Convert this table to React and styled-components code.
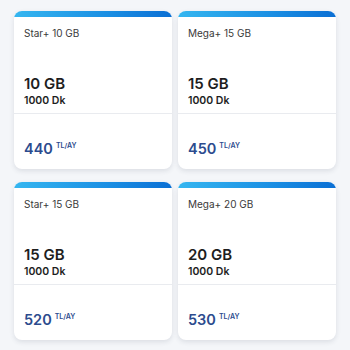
import styled, { createGlobalStyle } from "styled-components";

const packages = [
    { id: 1, name: "Star+ 10 GB", data: "10 GB", minutes: "1000 Dk", price: 440 },
    { id: 2, name: "Mega+ 15 GB", data: "15 GB", minutes: "1000 Dk", price: 450 },
    { id: 3, name: "Star+ 15 GB", data: "15 GB", minutes: "1000 Dk", price: 520 },
    { id: 4, name: "Mega+ 20 GB", data: "20 GB", minutes: "1000 Dk", price: 530 },
];

function App() {
    return (
        <>
            <GlobalStyle />
            <Grid>
                {packages.map((p) => (
                    <Card key={p.id}>
                        <Top>
                            <Title>{p.name}</Title>
                            <Amount>
                                <Data>{p.data}</Data>
                                <Minutes>{p.minutes}</Minutes>
                            </Amount>
                        </Top>
                        <Bottom>
                            <Price>
                                {p.price}
                                <sup>TL/AY</sup>
                            </Price>
                        </Bottom>
                    </Card>
                ))}
            </Grid>
        </>
    );
}

const GlobalStyle = createGlobalStyle`
    html, body {
        margin: 0;
        background: #f4f6f9;
        font-family: Inter, "Noto Sans", sans-serif;
    }
`;

const Grid = styled.div`
    display: grid;
    grid-template-columns: 158px 158px;
    column-gap: 6px;
    row-gap: 13px;
    padding: 11px 14px;
`;

const Card = styled.div`
    background: #fff;
    border-radius: 8px;
    height: 158px;
    box-shadow: 0 2px 5px rgba(40, 50, 70, 0.12);
    overflow: hidden;
    display: flex;
    flex-direction: column;

    &::before {
        content: "";
        display: block;
        flex: 0 0 6px;
        background: linear-gradient(90deg, #35b6f0 0%, #1a8ee3 60%, #0b6fd4 100%);
    }
`;

const Top = styled.div`
    flex: 0 0 97px;
    box-sizing: border-box;
    padding: 9px 10px 5px;
    display: flex;
    flex-direction: column;
    justify-content: space-between;
    border-bottom: 1px solid #e9ebef;
`;

const Title = styled.div`
    font-size: 10px;
    line-height: 14px;
    color: #3a3a3a;
`;

const Amount = styled.div`
    display: flex;
    flex-direction: column;
    gap: 1px;
`;

const Data = styled.div`
    font-size: 15px;
    line-height: 18px;
    font-weight: 600;
    color: #1e1e1e;
`;

const Minutes = styled.div`
    font-size: 10.5px;
    line-height: 14px;
    font-weight: 600;
    color: #1e1e1e;
`;

const Bottom = styled.div`
    flex: 1;
    padding: 23px 10px 0;
`;

const Price = styled.div`
    font-size: 14.5px;
    line-height: 18px;
    font-weight: 600;
    color: #2c4b8e;

    sup {
        font-size: 7px;
        margin-left: 3px;
        vertical-align: 6px;
    }
`;

export default App;
